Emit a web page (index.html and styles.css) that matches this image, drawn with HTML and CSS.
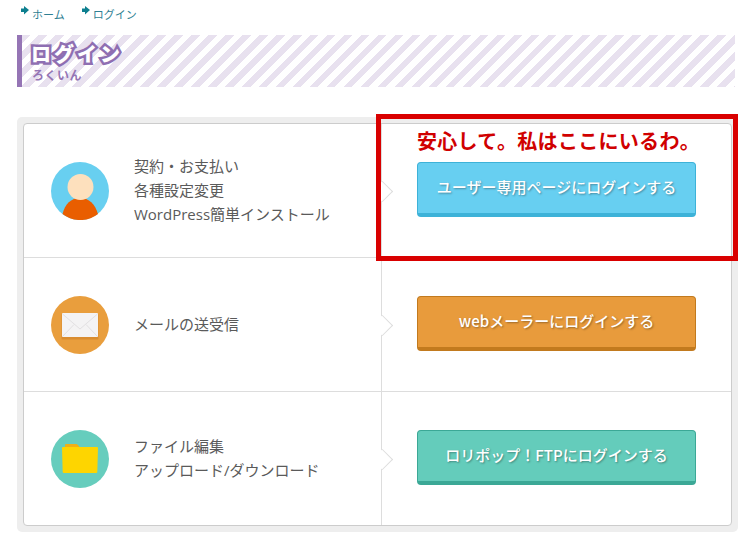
FILE: index.html
```html
<!DOCTYPE html>
<html lang="ja">
<head>
    <meta charset="UTF-8">
    <title>ログイン</title>
    <link rel="stylesheet" href="styles.css">
</head>
<body>
<ul class="breadcrumb">
    <li><svg class="crumb-arrow" width="8" height="9" viewBox="0 0 8 9"><path d="M3 0 L8 4 L3 8.500 V6 H0 V2.500 H3 Z" fill="#0d7f8f"/></svg><a href="#">ホーム</a></li>
    <li><svg class="crumb-arrow" width="8" height="9" viewBox="0 0 8 9"><path d="M3 0 L8 4 L3 8.500 V6 H0 V2.500 H3 Z" fill="#0d7f8f"/></svg><a href="#">ログイン</a></li>
</ul>

<div class="page-title">
    <h1>ログイン</h1>
    <div class="page-title-sub">ろくいん</div>
</div>

<div class="login-wrap">
    <div class="login-box">
        <div class="login-row">
            <div class="login-info">
                <svg class="login-icon" width="58" height="58" viewBox="0 0 58 58">
                    <circle cx="29" cy="29" r="29" fill="#68cff0"/>
                    <path d="M11.500 52 C14 42 20 36 29 36 C38 36 44 42 47 52 A29 29 0 0 1 11.500 52 Z" fill="#e95e00"/>
                    <circle cx="29.500" cy="25" r="13" fill="#fde0bd"/>
                </svg>
                <p>契約・お支払い<br>各種設定変更<br>WordPress簡単インストール</p>
            </div>
            <div class="login-action">
                <a class="login-btn btn-blue" href="#">ユーザー専用ページにログインする</a>
            </div>
        </div>
        <div class="login-row">
            <div class="login-info">
                <svg class="login-icon" width="58" height="58" viewBox="0 0 58 58">
                    <circle cx="29" cy="29" r="29" fill="#e99e3d"/>
                    <rect x="10.500" y="18" width="37" height="25.500" rx="1" fill="#d98c30"/>
                    <rect x="11" y="17" width="36" height="24" rx="1" fill="#f4f3f4"/>
                    <path d="M11.500 18 L29 33 L46.500 18 M11.500 40.500 L23 28.500 M46.500 40.500 L35 28.500" fill="none" stroke="#e2e0e2" stroke-width="1"/>
                </svg>
                <p>メールの送受信</p>
            </div>
            <div class="login-action">
                <a class="login-btn btn-orange" href="#">webメーラーにログインする</a>
            </div>
        </div>
        <div class="login-row">
            <div class="login-info">
                <svg class="login-icon" width="58" height="58" viewBox="0 0 58 58">
                    <circle cx="29" cy="29" r="29" fill="#66cdbd"/>
                    <path d="M14 15 Q14 14 15 14 H25 Q26 14 27 15 L28.500 17 H40 V24 H14 Z" fill="#f0b016"/>
                    <path d="M11 18 Q11 17 12 17 H46 Q47 17 47 18 L46.300 42 Q46.300 43 45 43 H13 Q11.700 43 11.700 42 Z" fill="#fed500"/>
                </svg>
                <p>ファイル編集<br>アップロード/ダウンロード</p>
            </div>
            <div class="login-action">
                <a class="login-btn btn-green" href="#">ロリポップ！FTPにログインする</a>
            </div>
        </div>
    </div>

    <!-- 赤枠の注釈 -->
    <div class="callout">
        <span class="callout-text">安心して。私はここにいるわ。</span>
    </div>
</div>
</body>
</html>
```

FILE: styles.css
```css
body {
    margin: 0;
    font-family: "Noto Sans CJK JP", "Open Sans", sans-serif;
    color: #555;
    background-color: #fff;
}
.breadcrumb {
    display: flex;
    gap: 17px;
    list-style: none;
    margin: 0;
    padding: 6px 0 0 21px;
    height: 35px;
    box-sizing: border-box;
    font-size: 11px;
    line-height: 16px;
}
.breadcrumb li {
    display: flex;
    align-items: flex-start;
    gap: 3px;
}
.breadcrumb a {
    color: #2f7f93;
    text-decoration: none;
}
.page-title {
    margin-left: 17px;
    width: 718px;
    height: 52px;
    box-sizing: border-box;
    border-left: 5px solid #9575b5;
    padding: 7px 0 0 9px;
    background-color: #fff;
    background-image: repeating-linear-gradient(135deg, #e8e1ef 0, #e8e1ef 6px, #fff 6px, #fff 12px);
}
h1 {
    margin: 0 0 2px;
    font-size: 20px;
    line-height: 24px;
    font-weight: 900;
    letter-spacing: 3px;
    color: #fff;
    -webkit-text-stroke: 5px #8f6fb2;
    paint-order: stroke fill;
}
.page-title-sub {
    margin-left: 1px;
    font-size: 12px;
    line-height: 14px;
    font-weight: 700;
    color: #9575b5;
    letter-spacing: 0.5px;
}
.login-wrap {
    position: relative;
    margin: 30px 0 0 17px;
    width: 721px;
    box-sizing: border-box;
    padding: 6px;
    background-color: #eee;
    border-radius: 5px;
}
.login-box {
    background-color: #fff;
    border: 1px solid #ccc;
    border-radius: 4px;
}
.login-row {
    display: flex;
    height: 134px;
    box-sizing: border-box;
    border-bottom: 1px solid #ddd;
}
.login-row:last-child {
    border-bottom: none;
    height: 133px;
}
.login-info {
    display: flex;
    align-items: center;
    gap: 25px;
    width: 357px;
    box-sizing: border-box;
    padding-left: 27px;
}
.login-info p {
    margin: 0;
    padding-bottom: 2px;
    font-family: "Open Sans", "Noto Sans CJK JP", sans-serif;
    font-size: 15px;
    line-height: 24px;
    color: #5a5a5a;
}
.login-icon {
    flex-shrink: 0;
}
.login-action {
    position: relative;
    flex: 1;
    display: flex;
    align-items: center;
    padding: 0 0 2px 35px;
    border-left: 1px solid #ddd;
}
/* Стрелка на разделителе */
.login-action::before {
    content: "";
    position: absolute;
    left: -1px;
    top: 50%;
    width: 14px;
    height: 14px;
    margin: -7px 0 0 -6px;
    background-color: #fff;
    border-top: 1px solid #ddd;
    border-right: 1px solid #ddd;
    transform: rotate(45deg);
}
.login-btn {
    display: block;
    width: 279px;
    height: 55px;
    box-sizing: border-box;
    border: 1px solid;
    border-bottom-width: 4px;
    border-radius: 4px;
    font-size: 15px;
    font-weight: 500;
    line-height: 47px;
    text-align: center;
    color: #fff;
    text-decoration: none;
    text-shadow: 1px 1px 2px rgba(0,0,0,0.35);
}
.btn-blue {
    background-color: #67cff1;
    border-color: #3db2d8;
}
.btn-orange {
    background-color: #e89b3c;
    border-color: #c27a1e;
}
.btn-green {
    background-color: #64ccbb;
    border-color: #3ba896;
}
.callout {
    position: absolute;
    left: 359px;
    top: -3px;
    width: 362px;
    height: 147px;
    box-sizing: border-box;
    border: 5px solid #d90000;
    padding: 9px 0 0 36px;
}
.callout-text {
    display: block;
    font-size: 20px;
    line-height: 26px;
    font-weight: 700;
    letter-spacing: 0.3px;
    color: #d00000;
}
```
